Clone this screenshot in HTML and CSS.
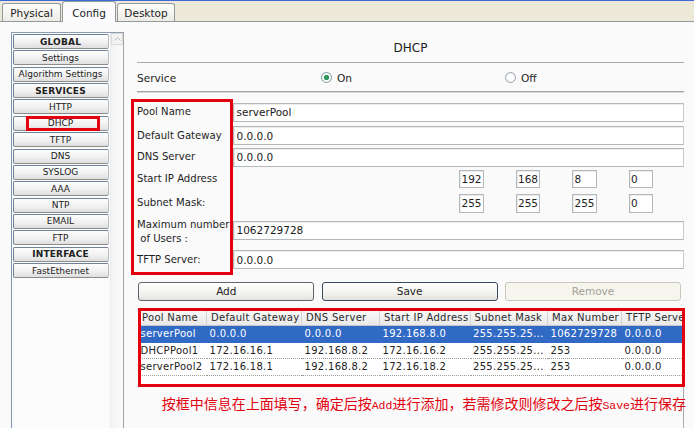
FILE: index.html
```html
<!DOCTYPE html>
<html>
<head>
<meta charset="utf-8">
<title>DHCP Config</title>
<link rel="stylesheet" href="styles.css">
</head>
<body>
<div class="app">
  <div class="tabbar">
    <div class="tab t-physical">Physical</div>
    <div class="tab t-config active">Config</div>
    <div class="tab t-desktop">Desktop</div>
  </div>
  <div class="content">
    <aside class="sidebar">
      <div class="side-list">
        <div class="side-btn head">GLOBAL</div>
        <div class="side-btn">Settings</div>
        <div class="side-btn">Algorithm Settings</div>
        <div class="side-btn head">SERVICES</div>
        <div class="side-btn">HTTP</div>
        <div class="side-btn">DHCP<span class="mark"></span></div>
        <div class="side-btn">TFTP</div>
        <div class="side-btn">DNS</div>
        <div class="side-btn">SYSLOG</div>
        <div class="side-btn">AAA</div>
        <div class="side-btn">NTP</div>
        <div class="side-btn">EMAIL</div>
        <div class="side-btn">FTP</div>
        <div class="side-btn head">INTERFACE</div>
        <div class="side-btn">FastEthernet</div>
      </div>
      <div class="scrollbar">
        <div class="sb-up"><svg width="7" height="4" viewBox="0 0 7 4"><polyline points="0.5,3.5 3.5,0.5 6.5,3.5" fill="none" stroke="#b9bcc0" stroke-width="1"/></svg></div>
      </div>
    </aside>
    <main class="panel">
      <div class="title">DHCP</div>
      <div class="service-row">
        <span class="svc-label">Service</span>
        <span class="radio"><span class="dot on"></span>On</span>
        <span class="radio"><span class="dot"></span>Off</span>
      </div>
      <div class="form">
        <div class="redbox"></div>
        <div class="lbl row1">Pool Name</div>
        <div class="field row1">serverPool</div>
        <div class="lbl row2">Default Gateway</div>
        <div class="field row2">0.0.0.0</div>
        <div class="lbl row3">DNS Server</div>
        <div class="field row3">0.0.0.0</div>
        <div class="lbl row4">Start IP Address</div>
        <div class="ip row4">
          <div class="oct">192</div><div class="oct">168</div><div class="oct">8</div><div class="oct">0</div>
        </div>
        <div class="lbl row5">Subnet Mask:</div>
        <div class="ip row5">
          <div class="oct">255</div><div class="oct">255</div><div class="oct">255</div><div class="oct">0</div>
        </div>
        <div class="lbl lbl-2 row6">Maximum number<br>&nbsp;of Users :</div>
        <div class="field row6">1062729728</div>
        <div class="lbl row7">TFTP Server:</div>
        <div class="field row7">0.0.0.0</div>
      </div>
      <div class="btn-row">
        <div class="btn">Add</div>
        <div class="btn focus">Save</div>
        <div class="btn disabled">Remove</div>
      </div>
      <div class="pane">
        <div class="table-box">
          <table class="pools">
            <colgroup>
              <col class="c1"><col class="c2"><col class="c3"><col class="c4"><col class="c5"><col class="c6"><col class="c7">
            </colgroup>
            <thead>
              <tr><th>Pool Name</th><th>Default Gateway</th><th>DNS Server</th><th>Start IP Address</th><th>Subnet Mask</th><th>Max Number</th><th>TFTP Server</th></tr>
            </thead>
            <tbody>
              <tr class="sel"><td>serverPool</td><td>0.0.0.0</td><td>0.0.0.0</td><td>192.168.8.0</td><td>255.255.25...</td><td>1062729728</td><td>0.0.0.0</td></tr>
              <tr><td>DHCPPool1</td><td>172.16.16.1</td><td>192.168.8.2</td><td>172.16.16.2</td><td>255.255.25...</td><td>253</td><td>0.0.0.0</td></tr>
              <tr><td>serverPool2</td><td>172.16.18.1</td><td>192.168.8.2</td><td>172.16.18.2</td><td>255.255.25...</td><td>253</td><td>0.0.0.0</td></tr>
            </tbody>
          </table>
        </div>
        <p class="note">按框中信息在上面填写，确定后按<span class="lat">Add</span>进行添加，若需修改则修改之后按<span class="lat">Save</span>进行保存</p>
      </div>
    </main>
  </div>
</div>
</body>
</html>
```
FILE: styles.css
```css
* { box-sizing: border-box; }
html, body { margin: 0; padding: 0; }
body {
  width: 694px;
  height: 428px;
  overflow: hidden;
  background: #fafafa;
  font-family: "DejaVu Sans", Verdana, sans-serif;
  color: #1e1e1e;
}
.app { display: flex; flex-direction: column; height: 428px; }

/* ---------- tabs ---------- */
.tabbar {
  flex: none;
  height: 22px;
  display: flex;
  align-items: flex-end;
  gap: 1px;
  padding-left: 2px;
  border-bottom: 1px solid #919b9c;
  background: linear-gradient(#3a6cd4 0 1px, #f1e4e2 1px 2px, #ece9d8 2px);
}
.tab {
  height: 18px;
  display: flex;
  align-items: center;
  justify-content: center;
  font-size: 10.5px;
  color: #222;
  border: 1px solid #919b9c;
  border-bottom: none;
  border-radius: 3px 3px 0 0;
  background: linear-gradient(#ffffff, #ecebe5);
}
.t-physical { width: 59px; }
.t-config { width: 54px; }
.t-desktop { width: 58px; }
.tab.active {
  height: 21px;
  margin-bottom: -1px;
  background: #fcfcfe;
  padding-top: 1px;
}

/* ---------- layout ---------- */
.content {
  flex: 1;
  display: flex;
  padding: 10px 0 0 11px;
  min-height: 0;
}

/* ---------- sidebar ---------- */
.sidebar {
  width: 113px;
  flex: none;
  display: flex;
  gap: 1px;
  border-left: 1px solid #7f96b2;
  border-top: 1px solid #8d9eb3;
  border-right: 1px solid #a4a4a4;
  background: #fbfbfb;
}
.side-list {
  width: 97px;
  padding: 1px 0.5px 0 0.5px;
  display: flex;
  flex-direction: column;
  gap: 1.36px;
}
.side-btn {
  position: relative;
  height: 15px;
  flex: none;
  display: flex;
  align-items: center;
  justify-content: center;
  font-size: 9px;
  color: #202020;
  border: 1px solid #8a99aa;
  border-top-color: #6f8297;
  border-left-color: #6f8297;
  border-right-color: #b8bcc0;
  border-bottom-color: #8c8c8c;
  border-radius: 2px;
  background: linear-gradient(#fdfdfd, #f1f1f1 55%, #dedede);
  white-space: nowrap;
}
.side-btn.head { font-weight: bold; letter-spacing: 0.2px; }
.mark {
  position: absolute;
  left: 12.5px;
  top: -1px;
  width: 74px;
  height: 15px;
  border: 3px solid #e5000f;
}
.scrollbar {
  width: 13px;
  background: linear-gradient(90deg, #f3f3f3, #fafafa);
  border-left: 1px solid #ececec;
}
.sb-up {
  height: 12px;
  display: flex;
  align-items: center;
  justify-content: center;
  background: #f2f2f2;
  border: 1px solid #dadada;
}

/* ---------- main panel ---------- */
.panel {
  flex: 1;
  min-width: 0;
  display: flex;
  flex-direction: column;
  padding: 0 10px 0 13px;
}
.title {
  flex: none;
  padding: 8px 0 6px;
  line-height: 16px;
  font-size: 12px;
  text-align: center;
  color: #222;
  border-bottom: 1px solid #a9a9a9;
}
.service-row {
  flex: none;
  height: 29px;
  display: grid;
  grid-template-columns: 184px 184px 1fr;
  align-items: center;
  padding-top: 1px;
  font-size: 10.6px;
  border-bottom: 1px solid #a3a3a3;
  box-shadow: 0 1px 0 #d8d8d8;
}
.radio { display: flex; align-items: center; gap: 5px; }
.dot {
  width: 11px;
  height: 11px;
  border-radius: 50%;
  border: 1px solid #9aa6b0;
  background: radial-gradient(circle, #ffffff 40%, #e2e4e6);
}
.dot.on {
  border-color: #7f9fa0;
  background: radial-gradient(circle, #2f9a5e 0 2.4px, #ffffff 3px 3.6px, #e0e4e4);
}

/* ---------- form ---------- */
.form {
  flex: none;
  margin: 7px 0 0 -6px;
  display: grid;
  grid-template-columns: 102px 1fr;
  grid-template-rows: 26px 21px 22.4px 21.6px 26.6px 27.8px 30.6px;
}
.redbox {
  grid-column: 1;
  grid-row: 1 / 8;
  border: 3px solid #e5000f;
}
.lbl {
  grid-column: 1;
  align-self: center;
  padding-left: 6px;
  font-size: 10.1px;
  line-height: 14px;
  color: #1e1e1e;
  white-space: nowrap;
}
.lbl-2 { padding-top: 3px; }
.row1 { grid-row: 1; }
.row2 { grid-row: 2; }
.row3 { grid-row: 3; }
.row4 { grid-row: 4; }
.row5 { grid-row: 5; }
.row6 { grid-row: 6; }
.row7 { grid-row: 7; }
.field {
  grid-column: 2;
  align-self: center;
  height: 19px;
  padding-left: 2.5px;
  display: flex;
  align-items: center;
  font-size: 10.5px;
  color: #1a1a1a;
  background: #fff;
  border: 1px solid #b3b8bd;
  border-right-color: #c9cccf;
  box-shadow: inset 1px 1px 0 #ececec;
}
.ip {
  grid-column: 2;
  align-self: center;
  display: flex;
  justify-content: flex-end;
  gap: 32px;
  padding-right: 31px;
}
.oct {
  width: 24.5px;
  height: 18.5px;
  padding-left: 1.5px;
  display: flex;
  align-items: center;
  font-size: 10.5px;
  background: #fff;
  border: 1px solid #b3b8bd;
  box-shadow: inset 1px 1px 0 #ececec;
}

/* ---------- buttons ---------- */
.btn-row {
  flex: none;
  margin: 7px 3px 0 1.3px;
  display: grid;
  grid-template-columns: repeat(3, 1fr);
  gap: 7.35px;
}
.btn {
  height: 19px;
  display: flex;
  align-items: center;
  justify-content: center;
  font-size: 10.5px;
  color: #1e1e1e;
  border: 1px solid #5d6670;
  border-radius: 3px;
  background: linear-gradient(#ffffff, #f3f3ef 60%, #e3e2dc);
}
.btn.focus { border-color: #3a4a5e; }
.btn.disabled {
  color: #a2a295;
  border-color: #cac8bb;
  background: #f6f5ee;
}

/* ---------- table pane ---------- */
.pane {
  flex: 1;
  margin: 6.7px 0 0 1px;
  border-right: 1px solid #ababab;
}
.table-box {
  height: 79px;
  margin-right: -2px;
  border: 3px solid #e5000f;
  background: #fff;
  overflow: hidden;
}
.pools {
  table-layout: fixed;
  width: 554px;
  margin-left: -3px;
  border-collapse: separate;
  border-spacing: 0;
  font-size: 10px;
  letter-spacing: 0.3px;
}
.c1 { width: 69px; }
.c2 { width: 95px; }
.c3 { width: 78px; }
.c4 { width: 90.5px; }
.c5 { width: 77.5px; }
.c6 { width: 74px; }
.c7 { width: 70px; }
.pools th {
  height: 15.6px;
  padding: 0 0 0 4px;
  font-weight: normal;
  text-align: left;
  color: #2a2a2a;
  white-space: nowrap;
  overflow: hidden;
  background: linear-gradient(#f8f8f8, #e9e9e9);
  border-right: 1px solid #d2d2d2;
  border-bottom: 1px solid #c6c6c6;
}
.pools td {
  line-height: 15.6px;
  padding: 0 0 0 2.5px;
  white-space: nowrap;
  overflow: hidden;
  color: #222;
  border-bottom: 1px dotted #9c9c9c;
}
.pools tr.sel td {
  background: #316ac5;
  color: #ffffff;
  border-bottom-color: #316ac5;
}

.note {
  margin: 8.3px 0 0 23.7px;
  line-height: 17px;
  font-size: 14px;
  font-family: "Noto Sans CJK SC", "DejaVu Sans", sans-serif;
  color: #e3000e;
  white-space: nowrap;
}
.note .lat {
  font-family: "Liberation Mono", monospace;
  font-size: 11.5px;
}
```
